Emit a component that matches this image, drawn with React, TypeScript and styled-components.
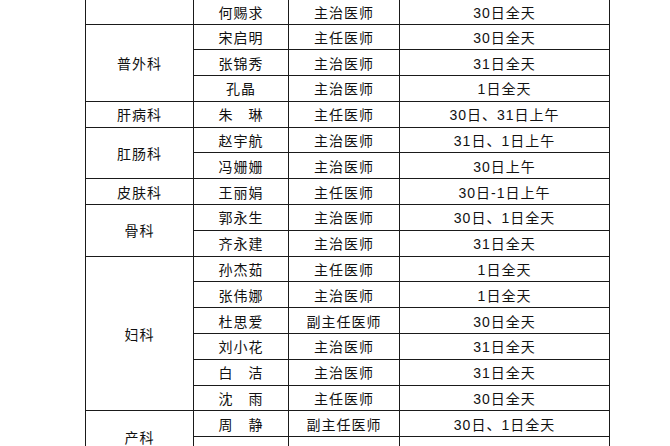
import React from 'react';
import styled, { createGlobalStyle } from 'styled-components';

type Doctor = [string, string, string];

interface Group {
  dept: string;
  doctors: Doctor[];
}

// 值班排班表（上一科室的最后一行从顶部开始）
const groups: Group[] = [
  { dept: '', doctors: [['何赐求', '主治医师', '30日全天']] },
  {
    dept: '普外科',
    doctors: [
      ['宋启明', '主任医师', '30日全天'],
      ['张锦秀', '主治医师', '31日全天'],
      ['孔晶', '主治医师', '1日全天'],
    ],
  },
  { dept: '肝病科', doctors: [['朱　琳', '主任医师', '30日、31日上午']] },
  {
    dept: '肛肠科',
    doctors: [
      ['赵宇航', '主治医师', '31日、1日上午'],
      ['冯姗姗', '主治医师', '30日上午'],
    ],
  },
  { dept: '皮肤科', doctors: [['王丽娟', '主任医师', '30日-1日上午']] },
  {
    dept: '骨科',
    doctors: [
      ['郭永生', '主治医师', '30日、1日全天'],
      ['齐永建', '主治医师', '31日全天'],
    ],
  },
  {
    dept: '妇科',
    doctors: [
      ['孙杰茹', '主任医师', '1日全天'],
      ['张伟娜', '主治医师', '1日全天'],
      ['杜思爱', '副主任医师', '30日全天'],
      ['刘小花', '主治医师', '31日全天'],
      ['白　洁', '主治医师', '31日全天'],
      ['沈　雨', '主任医师', '30日全天'],
    ],
  },
  {
    dept: '产科',
    doctors: [
      ['周　静', '副主任医师', '30日、1日全天'],
      ['', '', ''],
    ],
  },
];

const colWidths = [108, 95, 111, 210];

export default function App() {
  let first = true;
  return (
    <>
      <GlobalStyle />
      <Page>
        <Table>
          <colgroup>
            {colWidths.map((w, i) => (
              <Col key={i} $width={w} />
            ))}
          </colgroup>
          <tbody>
            {groups.map((g) =>
              g.doctors.map((d, i) => {
                const top = first;
                first = false;
                return (
                  <Row key={g.dept + i} $first={top}>
                    {i === 0 && <Cell rowSpan={g.doctors.length}>{g.dept}</Cell>}
                    <Cell>{d[0]}</Cell>
                    <Cell>{d[1]}</Cell>
                    <Cell>{d[2]}</Cell>
                  </Row>
                );
              })
            )}
          </tbody>
        </Table>
      </Page>
    </>
  );
}

const GlobalStyle = createGlobalStyle`
  html, body {
    margin: 0;
    padding: 0;
    background: #fff;
  }
  body {
    font-family: "Liberation Sans", "Noto Sans CJK SC", sans-serif;
    color: #111;
  }
`;

const Page = styled.div`
  width: 670px;
  height: 446px;
  overflow: hidden;
  padding-left: 85px;
  box-sizing: border-box;
`;

const Table = styled.table`
  border-collapse: collapse;
  table-layout: fixed;
  width: 524px;
  border-top: hidden;
`;

const Col = styled.col<{ $width: number }>`
  width: ${(p) => p.$width}px;
`;

const Row = styled.tr<{ $first?: boolean }>`
  height: ${(p) => (p.$first ? '24px' : '25.8px')};
`;

const Cell = styled.td`
  border: 1px solid #1a1a1a;
  padding: 2px 0 0 0;
  text-align: center;
  vertical-align: middle;
  font-size: 14px;
  letter-spacing: 1px;
  line-height: 16px;
  white-space: nowrap;
`;
